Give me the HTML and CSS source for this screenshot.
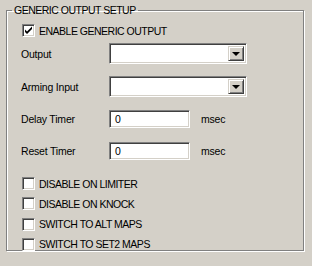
FILE: index.html
```html
<!DOCTYPE html>
<html lang="en">
<head>
    <meta charset="UTF-8">
    <title>Generic Output Setup</title>
    <link rel="stylesheet" href="styles.css">
</head>
<body>

    <fieldset class="group">
        <legend class="caps">GENERIC OUTPUT SETUP</legend>

        <label class="check top">
            <span class="box">
                <svg width="9" height="9" viewBox="0 0 9 9"><path d="M1 3.5 L3 5.5 L8 0.5 L8 3 L3 8 L1 6 Z" fill="#000"/></svg>
            </span>
            <span class="caps">ENABLE GENERIC OUTPUT</span>
        </label>

        <div class="row sel">
            <span class="lbl">Output</span>
            <div class="combo"><span class="arrow"></span></div>
        </div>

        <div class="row sel">
            <span class="lbl">Arming Input</span>
            <div class="combo"><span class="arrow"></span></div>
        </div>

        <div class="row txt">
            <span class="lbl">Delay Timer</span>
            <div class="edit">0</div>
            <span class="unit">msec</span>
        </div>

        <div class="row txt">
            <span class="lbl">Reset Timer</span>
            <div class="edit">0</div>
            <span class="unit">msec</span>
        </div>

        <div class="checks">
            <label class="check"><span class="box"></span><span class="caps">DISABLE ON LIMITER</span></label>
            <label class="check"><span class="box"></span><span class="caps">DISABLE ON KNOCK</span></label>
            <label class="check"><span class="box"></span><span class="caps">SWITCH TO ALT MAPS</span></label>
            <label class="check"><span class="box"></span><span class="caps">SWITCH TO SET2 MAPS</span></label>
        </div>
    </fieldset>

</body>
</html>
```

FILE: styles.css
```css
body{
    margin: 0;
    padding-top: 4px;
    background-color: #d4d0c8;
    font-family: "Liberation Sans", Arial, sans-serif;
    font-size: 10.5px;
    letter-spacing: -0.2px;
    color: #000;
    width: 312px;
    height: 262px;
    overflow: hidden;
}

.caps{
    letter-spacing: -0.5px;
}

.group{
    margin: 0 0 0 6px;
    width: 298px;
    height: 247px;
    box-sizing: border-box;
    padding: 0 0 0 14px;
    border: 1px solid #808080;
    box-shadow: inset 1px 1px 0 #fff, 1px 1px 0 #fff;
}

legend{
    margin-left: -9px;
    padding: 0 2px;
    line-height: 13px;
}

.check{
    display: flex;
    align-items: center;
    height: 13px;
    gap: 4px;
    margin-left: 1px;
}

.top{
    margin-top: 7px;
}

.box{
    width: 13px;
    height: 13px;
    box-sizing: border-box;
    background-color: #fff;
    border-top: 1px solid #808080;
    border-left: 1px solid #808080;
    border-right: 1px solid #fff;
    border-bottom: 1px solid #fff;
    box-shadow: inset 1px 1px 0 #404040, inset -1px -1px 0 #d4d0c8;
    display: grid;
    place-items: center;
}

.row{
    display: flex;
    align-items: center;
}

.lbl{
    width: 88px;
}

.sel{
    margin-top: 6px;
    height: 21px;
}

.sel + .sel{
    margin-top: 12px;
}

.txt{
    margin-top: 13px;
    height: 18px;
}

.txt + .txt{
    margin-top: 14px;
}

.combo,.edit{
    box-sizing: border-box;
    height: 100%;
    background-color: #fff;
    border-top: 1px solid #808080;
    border-left: 1px solid #808080;
    border-right: 1px solid #fff;
    border-bottom: 1px solid #fff;
    box-shadow: inset 1px 1px 0 #404040, inset -1px -1px 0 #d4d0c8;
}

.combo{
    width: 138px;
    display: flex;
    justify-content: flex-end;
    padding: 2px;
}

.arrow{
    width: 16px;
    height: 100%;
    box-sizing: border-box;
    background-color: #d4d0c8;
    border-top: 1px solid #d4d0c8;
    border-left: 1px solid #d4d0c8;
    border-right: 1px solid #404040;
    border-bottom: 1px solid #404040;
    box-shadow: inset 1px 1px 0 #fff, inset -1px -1px 0 #808080;
    display: grid;
    place-items: center;
}

.arrow::after{
    content: "";
    border-left: 4px solid transparent;
    border-right: 4px solid transparent;
    border-top: 4px solid #000;
}

.edit{
    width: 81px;
    padding: 2px 0 0 5px;
    line-height: 13px;
}

.unit{
    margin-left: 11px;
}

.checks{
    margin-top: 17px;
    display: flex;
    flex-direction: column;
    gap: 7.3px;
}
```
